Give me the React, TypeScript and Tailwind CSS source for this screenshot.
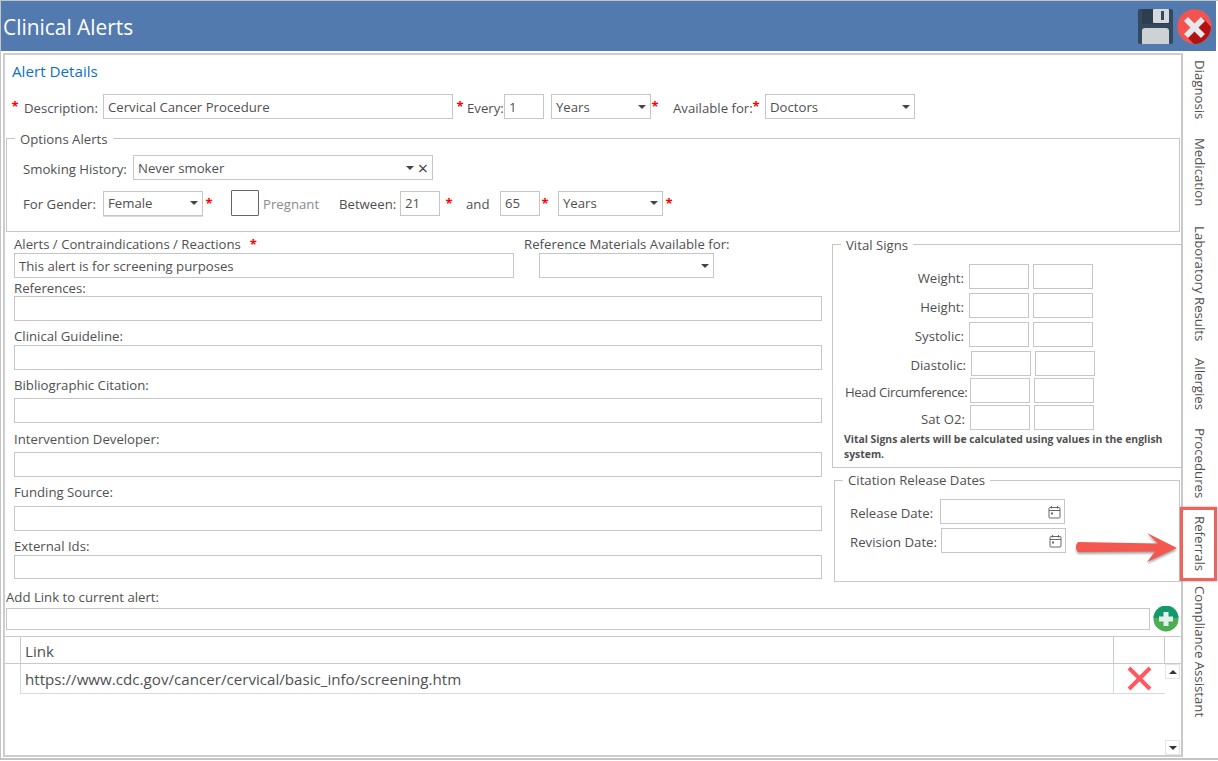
import type { ReactNode } from "react"

const Star = ({ className = "" }: { className?: string }) => (
  <span className={`inline-block w-[8px] text-center text-[13px] font-bold leading-none text-[#f00] ${className}`}>*</span>
)

const Label = ({ className = "", children }: { className?: string; children: ReactNode }) => (
  <span className={`h-[14px] leading-[16px] ${className}`}>{children}</span>
)

function Box({ className = "", children }: { className?: string; children?: ReactNode }) {
  return (
    <div className={`flex h-[25px] shrink-0 items-center border border-[#c6c6c6] bg-white pl-1 pt-[2px] text-[#505050] ${className}`}>
      {children}
    </div>
  )
}

const Caret = () => <span className="-mt-[2px] ml-auto mr-[4px] h-0 w-0 border-x-[4px] border-t-[4px] border-x-transparent border-t-[#444]" />

function Select({ className = "", value = "" }: { className?: string; value?: string }) {
  return (
    <Box className={className}>
      {value}
      <Caret />
    </Box>
  )
}

function Group({
  title,
  className = "",
  legend = "leading-[16px]",
  children,
}: {
  title: string
  className?: string
  legend?: string
  children: ReactNode
}) {
  return (
    <fieldset className={`border border-[#c6c6c6] ${className}`}>
      <legend className={`ml-[8px] h-[14px] px-[5px] ${legend}`}>{title}</legend>
      {children}
    </fieldset>
  )
}

function LinedField({ label, mt, gap, height = "h-[25px]" }: { label: string; mt: string; gap: string; height?: string }) {
  return (
    <div className={mt}>
      <div className="h-[14px] leading-[14px]">{label}</div>
      <div className={`${gap} ${height} w-[808px] border border-[#c6c6c6]`} />
    </div>
  )
}

function VitalRow({ label, ml, mt }: { label: string; ml: string; mt: string }) {
  return (
    <div className={`flex items-center ${mt} ${ml}`}>
      <Label className="w-[130px] text-right">{label}</Label>
      <div className="ml-[5px] h-[25px] w-[60px] border border-[#c6c6c6]" />
      <div className="ml-1 h-[25px] w-[60px] border border-[#c6c6c6]" />
    </div>
  )
}

const CalendarIcon = () => (
  <svg width="13" height="14" viewBox="0 0 13 14" className="-mt-[2px] ml-auto mr-[3px]" fill="none" stroke="#666" strokeWidth="1">
    <rect x="1" y="2.5" width="11" height="10.5" rx="1" />
    <path d="M1 5.5h11M3.5 1v2.5M9.5 1v2.5" />
    <rect x="3" y="7.5" width="2" height="2" fill="#666" stroke="none" />
  </svg>
)

const SaveIcon = () => (
  <svg width="35" height="35" viewBox="0 0 35 35" className="shrink-0">
    <rect width="35" height="35" rx="2" fill="#34495e" />
    <rect x="4" width="27" height="15" fill="#2c3e50" />
    <rect x="15" width="16" height="14" rx="1" fill="#d5d9dc" />
    <rect x="23" y="2" width="3" height="9" fill="#34495e" />
    <path d="M4 35V22q0-3 3-3h21q3 0 3 3v13z" fill="#cdd2d4" />
  </svg>
)

const CloseIcon = () => (
  <svg width="35" height="35" viewBox="0 0 35 35" className="ml-[4px] shrink-0">
    <circle cx="17.5" cy="17.5" r="17.2" fill="#f2554f" />
    <path d="M8 26 26 9l8 9a17 17 0 0 1-17 17z" fill="#b31212" />
    <path d="M11 8l6.5 6.5L24 8l4 4-6.5 6.5L28 25l-4 4-6.5-6.5L11 29l-4-4 6.5-6.5L7 12z" fill="#e5e9ec" />
  </svg>
)

const PlusIcon = () => (
  <svg width="26" height="26" viewBox="0 0 26 26" className="ml-[3px] shrink-0">
    <circle cx="13" cy="13" r="12.5" fill="#4bae52" />
    <path d="M.5 12a12.5 12.5 0 0 1 25 0z" fill="#13996c" />
    <path d="M10.5 6h5v4.500H20v5h-4.500V20h-5v-4.500H6v-5h4.500z" fill="#e2f2ea" />
  </svg>
)

const tabs = [
  { label: "Diagnosis", mt: "mt-[9px]" },
  { label: "Medication", mt: "mt-[19px]" },
  { label: "Laboratory Results", mt: "mt-[19px]" },
  { label: "Allergies", mt: "mt-[17px]" },
  { label: "Procedures", mt: "mt-[18px]" },
  { label: "Referrals", mt: "mt-[18px]" },
  { label: "Compliance Assistant", mt: "mt-[15px]" },
]

export default function App() {
  return (
    <div className="relative h-[761px] w-[1218px] overflow-hidden whitespace-nowrap bg-white font-['Open_Sans','Noto_Sans',sans-serif] text-[13.2px] text-[#505050]">
      <div className="h-[760px] w-[1218px] border-b-[2px] border-l border-t border-[#c4c4c4]">
        <header className="flex h-[50px] w-[1215px] items-center bg-[#527aae] pl-[2px] pr-[4px]">
          <h1 className="pt-[2px] text-[20.9px] leading-none text-white">Clinical Alerts</h1>
          <div className="ml-auto flex">
            <SaveIcon />
            <CloseIcon />
          </div>
        </header>

        <div className="flex">
          <main className="ml-[2px] mt-[2px] h-[704px] w-[1180px] border-2 border-[#cdcdcd] border-r-[#c9c9c9] pl-[1px]">
            <h2 className="ml-[6px] mt-[7px] text-[15.2px] leading-[18px] text-[#0f6fc6]">Alert Details</h2>

            <div className="mt-[14px] flex items-center">
              <Star className="ml-[5px]" />
              <Label className="ml-[5px] w-[74px]">Description:</Label>
              <Box className="ml-[5px] w-[350px]">Cervical Cancer Procedure</Box>
              <Star className="ml-[3px]" />
              <Label className="ml-[3px] w-[36px]">Every:</Label>
              <Box className="ml-[1px] w-[40px]">1</Box>
              <Select className="ml-[7px] w-[100px]" value="Years" />
              <Star />
              <Label className="ml-[14px] w-[79px]">Available for:</Label>
              <Star />
              <Select className="ml-[5px] w-[150px]" value="Doctors" />
            </div>

            <Group title="Options Alerts" className="mt-[12px] h-[101px] w-[1174px]">
              <div className="mt-[10px] flex items-center pl-[16px]">
                <Label className="w-[105px]">Smoking History:</Label>
                <Box className="ml-[5px] w-[300px]">
                  Never smoker
                  <Caret />
                  <span className="-mt-[2px] mr-[4px] text-[18px] leading-none text-[#444]">×</span>
                </Box>
              </div>
              <div className="mt-[10px] flex items-center pl-[16px]">
                <Label className="w-[75px]">For Gender:</Label>
                <Select className="ml-[5px] w-[100px] shadow-[0_1px_0_#ddd]" value="Female" />
                <Star className="ml-[2px]" />
                <div className="ml-[18px] h-[26px] w-[28px] rounded-[1px] border border-[#666]" />
                <Label className="ml-[4px] w-[60px] text-[#8a8a8a]">Pregnant</Label>
                <Label className="ml-[16px] w-[56px]">Between:</Label>
                <Box className="ml-[5px] w-[40px]">21</Box>
                <Star className="ml-[5px]" />
                <Label className="ml-[13px] w-[24px]">and</Label>
                <Box className="ml-[10px] w-[40px]">65</Box>
                <Star className="ml-[1px]" />
                <Select className="ml-[9px] w-[105px]" value="Years" />
                <Star className="ml-[2px]" />
              </div>
            </Group>

            <div className="flex">
              <div className="ml-[8px] w-[808px]">
                <div className="mt-[5px] flex">
                  <div className="w-[500px]">
                    <div className="h-[14px] leading-[14px]">
                      Alerts / Contraindications / Reactions <Star className="ml-[5px]" />
                    </div>
                    <Box className="mt-[2px] w-[500px]">This alert is for screening purposes</Box>
                  </div>
                  <div className="ml-[10px]">
                    <div className="h-[14px] leading-[14px]">Reference Materials Available for:</div>
                    <Select className="ml-[15px] mt-[2px] w-[175px]" />
                  </div>
                </div>
                <LinedField label="References:" mt="mt-[3px]" gap="mt-[1px]" />
                <LinedField label="Clinical Guideline:" mt="mt-[8px]" gap="mt-[2px]" />
                <LinedField label="Bibliographic Citation:" mt="mt-[8px]" gap="mt-[6px]" />
                <LinedField label="Intervention Developer:" mt="mt-[9px]" gap="mt-[6px]" />
                <LinedField label="Funding Source:" mt="mt-[8px]" gap="mt-[7px]" />
                <LinedField label="External Ids:" mt="mt-[8px]" gap="mt-[2px]" height="h-[24px]" />
              </div>

              <div className="ml-[10px] w-[350px]">
                <Group title="Vital Signs" className="mt-[5px] h-[231px] w-[350px]">
                  <VitalRow label="Weight:" ml="ml-[1px]" mt="mt-[13px]" />
                  <VitalRow label="Height:" ml="ml-[1px]" mt="mt-[4px]" />
                  <VitalRow label="Systolic:" ml="ml-[1px]" mt="mt-[4px]" />
                  <VitalRow label="Diastolic:" ml="ml-[3px]" mt="mt-[4px]" />
                  <div className="mt-[2px] flex items-center pl-[12px]">
                    <Label className="w-[125px] tracking-[-0.38px]">Head Circumference:</Label>
                    <div className="h-[25px] w-[60px] border border-[#c6c6c6]" />
                    <div className="ml-1 h-[25px] w-[60px] border border-[#c6c6c6]" />
                  </div>
                  <VitalRow label="Sat O2:" ml="ml-[2px]" mt="mt-[2px]" />
                  <p className="ml-[11px] mt-[2px] w-[330px] whitespace-normal text-[10.4px] font-bold leading-[15px]">
                    Vital Signs alerts will be calculated using values in the english system.
                  </p>
                </Group>
                <Group title="Citation Release Dates" legend="leading-[14px]" className="ml-[2px] mt-[5px] h-[109px] w-[346px]">
                  <div className="mt-[12px] flex items-center pl-[15px]">
                    <Label className="w-[85px]">Release Date:</Label>
                    <Box className="ml-[5px] w-[125px]">
                      <CalendarIcon />
                    </Box>
                  </div>
                  <div className="mt-[4px] flex items-center pl-[15px]">
                    <Label className="w-[86px]">Revision Date:</Label>
                    <Box className="ml-[5px] w-[125px]">
                      <CalendarIcon />
                    </Box>
                  </div>
                </Group>
              </div>
            </div>

            <div className="mt-[8px] h-[14px] leading-[14px]">Add Link to current alert:</div>
            <div className="mt-[2px] flex items-center">
              <div className="h-[22px] w-[1144px] border border-[#c6c6c6]" />
              <PlusIcon />
            </div>

            <div className="relative -ml-px mt-[4px] h-[119px] w-[1177px] border-t border-[#c9c9c9] text-[15.15px]">
              <div className="flex h-[27px] border-b border-[#c9c9c9]">
                <div className="w-[16px] border-r border-[#c9c9c9]" />
                <div className="flex w-[1093px] items-center border-r border-[#c9c9c9] pl-[4px] pt-[2px]">Link</div>
                <div className="w-[51px] border-r border-[#c9c9c9]" />
              </div>
              <div className="flex h-[30px] w-[1160px]">
                <div className="w-[15px]" />
                <div className="flex w-[1094px] items-center border-b border-l border-r border-[#d4d9de] pl-[4px] pt-[2px]">
                  https://www.cdc.gov/cancer/cervical/basic_info/screening.htm
                </div>
                <div className="flex w-[51px] items-center border-b border-[#d4d9de] pl-[13px]">
                  <svg width="25" height="25" viewBox="0 0 25 25" stroke="#fb5a62" strokeWidth="4">
                    <path d="M2 2l21 21M23 2 2 23" />
                  </svg>
                </div>
              </div>
              <div className="absolute right-[2px] top-[27px] flex h-[91px] w-[15px] flex-col justify-between">
                <div className="flex h-[15px] items-center justify-center border border-[#e4e4e4]">
                  <span className="h-0 w-0 border-x-[4px] border-b-[4px] border-x-transparent border-b-[#333]" />
                </div>
                <div className="flex h-[15px] items-center justify-center border border-[#e4e4e4]">
                  <span className="h-0 w-0 border-x-[4px] border-t-[4px] border-x-transparent border-t-[#333]" />
                </div>
              </div>
            </div>
          </main>

          <nav className="flex w-[34px] flex-col items-center text-[#505050]">
            {tabs.map((tab) => (
              <span key={tab.label} className={`${tab.mt} whitespace-nowrap leading-[18px] [writing-mode:vertical-rl]`}>
                {tab.label}
              </span>
            ))}
          </nav>
        </div>
      </div>

      {/* annotation over the tab rail */}
      <div className="absolute left-[1180px] top-[507px] h-[74px] w-[37px] border-[3px] border-[#f0625c] shadow-[0_0_2px_#999]" />
      <svg className="absolute left-[1073px] top-[530px] drop-shadow-[0_2px_1px_rgba(0,0,0,.35)]" width="106" height="36" viewBox="0 0 106 36">
        <path d="M5 12 85 13.500 74 3l30 15-30 14 8-10.500L5 22q-4-5 0-10z" fill="#f4574f" />
      </svg>
    </div>
  )
}
